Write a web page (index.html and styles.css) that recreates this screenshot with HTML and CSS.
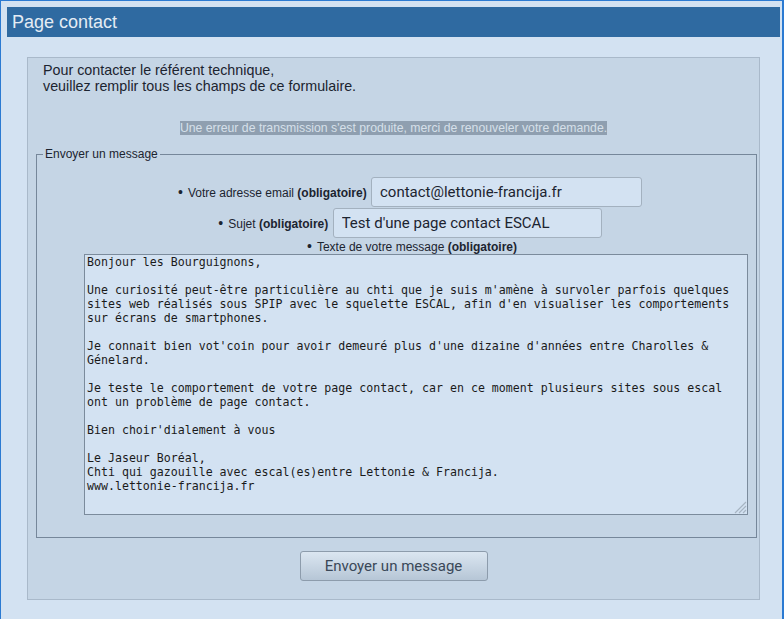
FILE: index.html
```html
<!DOCTYPE html>
<html lang="fr">
	<head>
		<meta charset="utf-8" />
		<title>Page contact</title>
		<link rel="stylesheet" href="styles.css">
	</head>
	<body>
		<div id="page">
			<h1 id="titre">Page contact</h1>

			<div id="formulaire">
				<p class="intro">Pour contacter le référent technique,<br>veuillez remplir tous les champs de ce formulaire.</p>

				<p class="erreur"><span>Une erreur de transmission s'est produite, merci de renouveler votre demande.</span></p>

				<fieldset>
					<legend>Envoyer un message</legend>
					<ul>
						<li class="ligne">
							<label for="email">Votre adresse email <strong>(obligatoire)</strong></label>
							<input type="text" id="email" class="champ champ-email" value="contact@lettonie-francija.fr"/>
						</li>
						<li class="ligne">
							<label for="sujet">Sujet <strong>(obligatoire)</strong></label>
							<input type="text" id="sujet" class="champ champ-sujet" value="Test d'une page contact ESCAL"/>
						</li>
						<li class="ligne-texte">
							<label for="texte">Texte de votre message <strong>(obligatoire)</strong></label>
							<div class="zone">
								<textarea id="texte">Bonjour les Bourguignons,

Une curiosité peut-être particulière au chti que je suis m'amène à survoler parfois quelques sites web réalisés sous SPIP avec le squelette ESCAL, afin d'en visualiser les comportements sur écrans de smartphones.

Je connait bien vot'coin pour avoir demeuré plus d'une dizaine d'années entre Charolles &amp; Génelard.

Je teste le comportement de votre page contact, car en ce moment plusieurs sites sous escal ont un problème de page contact.

Bien choir'dialement à vous

Le Jaseur Boréal,
Chti qui gazouille avec escal(es)entre Lettonie &amp; Francija.
www.lettonie-francija.fr</textarea>
								<!-- poignée de redimensionnement -->
								<svg class="poignee" width="14" height="14" viewBox="0 0 14 14">
									<path d="M13 2L2 13M13 6L6 13M13 10L10 13" stroke="#a6b4c2" stroke-width="1.2" fill="none"/>
								</svg>
							</div>
						</li>
					</ul>
				</fieldset>

				<div class="boutons">
					<button type="button" id="envoyer">Envoyer un message</button>
				</div>
			</div>
		</div>
	</body>
</html>
```

FILE: styles.css
```css
body{
	margin: 0;
	background-color: #d3e2f2;
	font-family: "Liberation Sans", Arial, sans-serif;
	color: #1c2430;
}
#page{
	height: 619px;
	box-sizing: border-box;
	border: 1px solid #2b7ad2;
	border-right-width: 2px;
	border-bottom: 0;
	padding: 6px 2px 0 6px;
	background-color: #d3e2f2;
}
#titre{
	margin: 0;
	height: 30px;
	padding-left: 5px;
	background-color: #2f6aa1;

	font-size: 18px;
	font-weight: normal;
	line-height: 30px;
	color: #e4ecf4;
}
#formulaire{
	margin: 20px 20px 0 20px;
	height: 543px;
	box-sizing: border-box;
	border: 1px solid #a9b9ca;
	background-color: #c5d5e5;
	padding-top: 4px;
}
.intro{
	margin: 0;
	padding-left: 15px;
	font-size: 14.3px;
	line-height: 16px;
}
.erreur{
	margin: 27px 0 0 0;
	text-align: center;
	font-size: 12.25px;
	line-height: 14px;
}
.erreur span{
	background-color: #8f9fb0;
	color: #d6e0ea;
}
fieldset{
	margin: 12px 2px 0 8px;
	padding: 0 8px 22px 6px;
	border: 1px solid #76879a;
}
legend{
	padding: 0 2px;
	font-size: 12px;
	line-height: 14px;
	color: #1c2430;
}
ul{
	list-style: none;
	margin: 16px 0 0 0;
	padding-left: 41px;
	font-size: 12px;
}
li{
	text-align: center;
}
li label::before{
	content: "•";
	font-size: 14px;
	margin-right: 5px;
}
.ligne{
	padding-right: 12px;
	height: 31px;
}
.ligne label{
	vertical-align: middle;
}
.champ{
	height: 30px;
	box-sizing: border-box;
	border: 1px solid #a3b1bf;
	border-radius: 3px;
	background-color: #d3e2f2;
	padding: 0 8px;
	margin-left: 1px;
	vertical-align: middle;
	outline: none;

	font-family: Roboto, "Liberation Sans", sans-serif;
	font-size: 15px;
	color: #1c2430;
}
.champ-email{
	width: 271px;
}
.champ-sujet{
	width: 269px;
}
.ligne-texte{
	line-height: 14px;
}
.ligne-texte label{
	padding-right: 8px;
}
.zone{
	position: relative;
	width: 664px;
	height: 261px;
}
#texte{
	display: block;
	width: 664px;
	height: 261px;
	box-sizing: border-box;
	border: 1px solid #7b8b9c;
	background-color: #d3e2f2;
	padding: 0 2px 2px 2px;
	text-align: left;
	resize: none;

	font-family: "DejaVu Sans Mono", monospace;
	font-size: 11.6px;
	line-height: 14px;
	color: #1a1a1a;
}
.poignee{
	position: absolute;
	right: 1px;
	bottom: 1px;
}
.boutons{
	margin-top: 13px;
	text-align: center;
}
#envoyer{
	width: 188px;
	height: 30px;
	border: 1px solid #8d9cac;
	border-radius: 3px;
	background: linear-gradient(#dbe6f1, #b6c6d6);

	font-family: Roboto, "Liberation Sans", sans-serif;
	font-size: 15px;
	color: #3a4858;
}
```
